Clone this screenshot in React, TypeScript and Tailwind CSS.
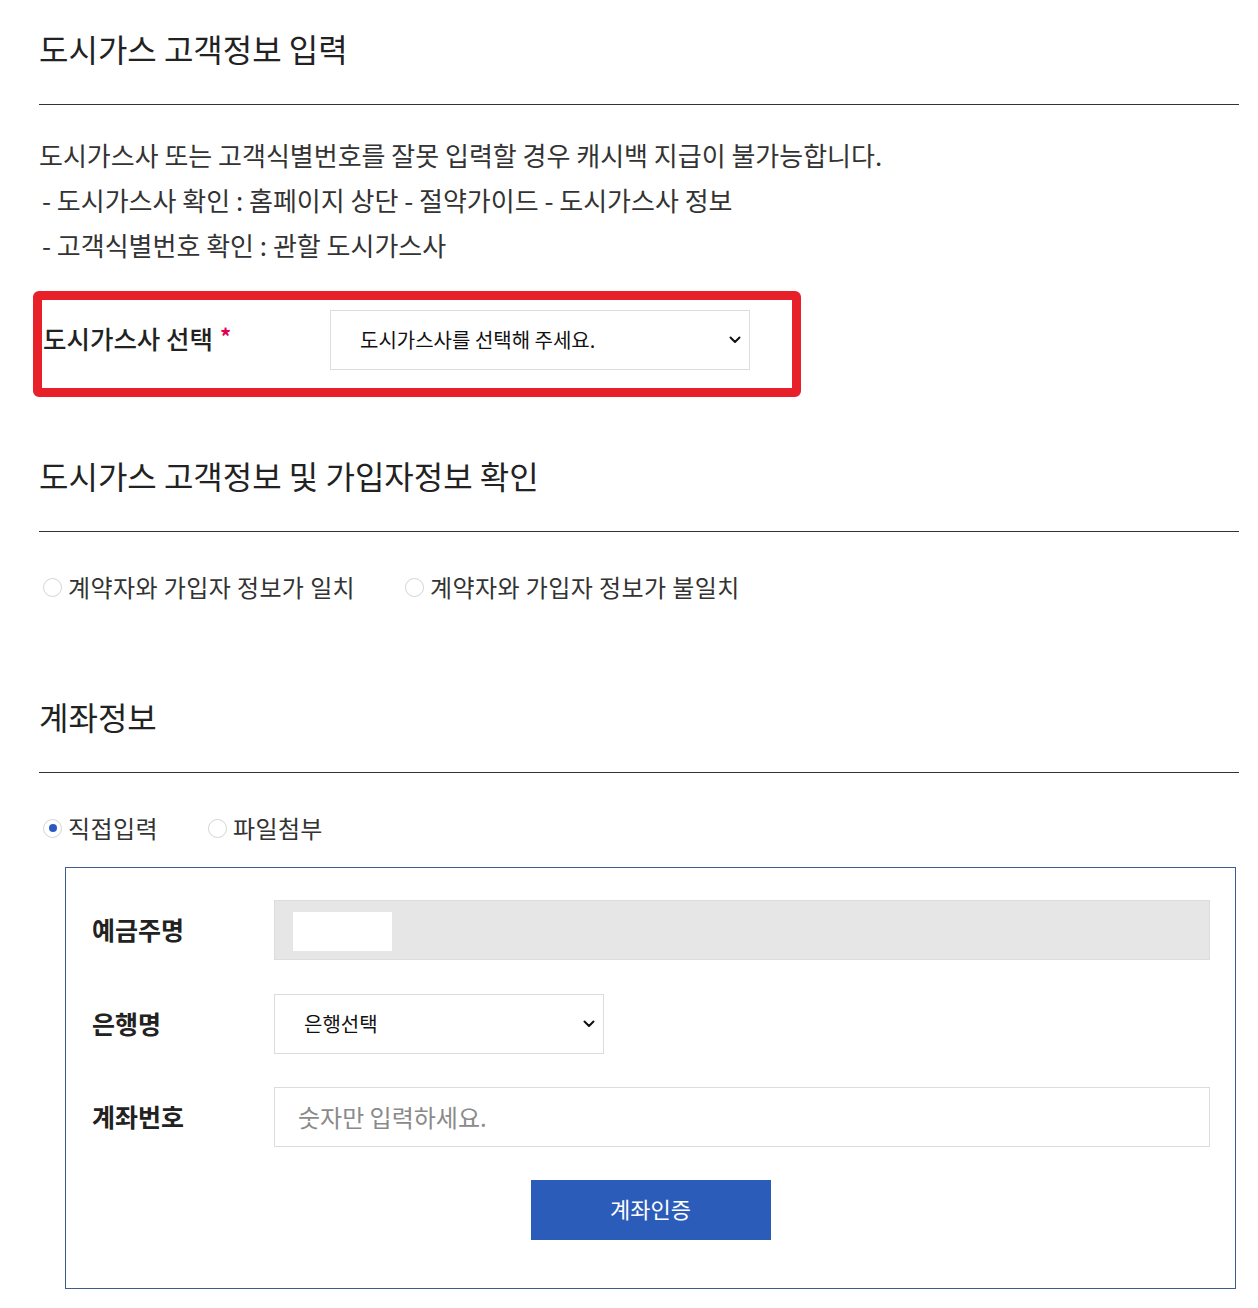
import React from "react";

const font = { fontFamily: '"Noto Sans CJK KR", "Noto Sans", sans-serif' };

function Chevron() {
  return (
    <svg width="12" height="8" viewBox="0 0 12 8" className="shrink-0">
      <polyline points="1.5,1.5 6,6 10.5,1.5" fill="none" stroke="#111" strokeWidth="2" strokeLinecap="round" strokeLinejoin="round" />
    </svg>
  );
}

function Radio({ checked, label }: { checked?: boolean; label: string }) {
  return (
    <label className="flex items-center h-[30px]">
      <span className="ml-[4px] w-[19px] h-[19px] rounded-full border border-[#d4d4d4] bg-white flex items-center justify-center shrink-0">
        {checked && <span className="w-[8px] h-[8px] rounded-full bg-[#2a5bc4]" />}
      </span>
      <span className="ml-[6px] text-[24px] text-[#333] leading-[30px] tracking-[0.4px]">{label}</span>
    </label>
  );
}

function Heading({ children, className }: { children: React.ReactNode; className?: string }) {
  return (
    <h2 className={"text-[32px] leading-[40px] font-normal text-[#222] pb-[36px] border-b border-[#333] " + (className ?? "")}>
      {children}
    </h2>
  );
}

export default function App() {
  return (
    <div className="bg-white min-h-[1308px]" style={font}>
      <div className="ml-[39px] w-[1200px] pb-[19px]">
        <Heading className="pt-[28px]">도시가스 고객정보 입력</Heading>

        <div className="mt-[27px] text-[26px] leading-[45px] text-[#333]">
          <p>도시가스사 또는 고객식별번호를 잘못 입력할 경우 캐시백 지급이 불가능합니다.</p>
          <p className="pl-[3px]">- 도시가스사 확인 : 홈페이지 상단 - 절약가이드 - 도시가스사 정보</p>
          <p className="pl-[3px]">- 고객식별번호 확인 : 관할 도시가스사</p>
        </div>

        <div className="mt-[24px] -ml-[6px] w-[768px] h-[106px] border-[9px] border-[#e8202a] rounded-[6px]">
          <div className="flex items-center pt-[10px] pl-px">
            <div className="w-[287px] flex items-start -mt-[4px]">
              <span className="text-[25.5px] font-medium text-[#222] leading-[32px]">도시가스사 선택</span>
              <span className="ml-[7px] text-[22px] font-bold text-[#e0004d] leading-[26px]">*</span>
            </div>
            <div className="w-[420px] h-[60px] border border-[#dddddd] bg-white flex items-center justify-between pl-[29px] pr-[8px]">
              <span className="text-[20px] text-[#111]">도시가스사를 선택해 주세요.</span>
              <Chevron />
            </div>
          </div>
        </div>

        <Heading className="mt-[58px]">도시가스 고객정보 및 가입자정보 확인</Heading>

        <div className="mt-[40px] flex items-center gap-[46px]">
          <Radio label="계약자와 가입자 정보가 일치" />
          <Radio label="계약자와 가입자 정보가 불일치" />
        </div>

        <Heading className="mt-[94px]">계좌정보</Heading>

        <div className="mt-[40px] flex items-center gap-[46px]">
          <Radio checked label="직접입력" />
          <Radio label="파일첨부" />
        </div>

        <div className="mt-[24px] ml-[26px] w-[1171px] border border-[#3f5d8c] pt-[32px] pb-[48px] pl-[26px] pr-[25px]">
          <div className="flex items-center h-[60px]">
            <div className="w-[182px] text-[25px] font-bold text-[#222]">예금주명</div>
            <div className="flex-1 h-[60px] bg-[#e6e6e6] border border-[#dcdcdc] pl-[18px] pt-[11px]">
              <div className="w-[99px] h-[39px] bg-white" />
            </div>
          </div>
          <div className="flex items-center h-[60px] mt-[34px]">
            <div className="w-[182px] text-[25px] font-bold text-[#222]">은행명</div>
            <div className="w-[330px] h-[60px] border border-[#dcdcdc] bg-white flex items-center justify-between pl-[29px] pr-[8px]">
              <span className="text-[20px] text-[#111]">은행선택</span>
              <Chevron />
            </div>
          </div>
          <div className="flex items-center h-[60px] mt-[33px]">
            <div className="w-[182px] text-[25px] font-bold text-[#222]">계좌번호</div>
            <div className="flex-1 h-[60px] border border-[#dcdcdc] bg-white flex items-center pl-[23px]">
              <span className="text-[24px] text-[#8a8a8a]">숫자만 입력하세요.</span>
            </div>
          </div>
          <div className="flex justify-center mt-[33px] -ml-[26px] -mr-[25px]">
            <button className="w-[240px] h-[60px] bg-[#2b5cb9] text-white text-[22px] leading-[56px] pb-[4px]">계좌인증</button>
          </div>
        </div>
      </div>
    </div>
  );
}
